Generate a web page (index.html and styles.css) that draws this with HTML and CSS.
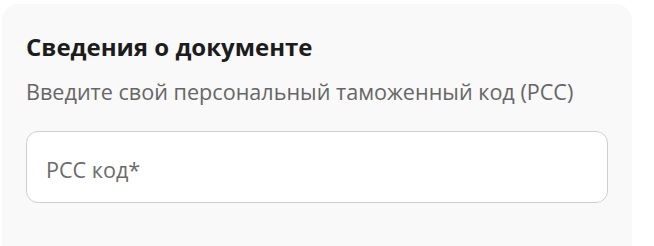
FILE: index.html
```html
<!DOCTYPE html>
<html lang="ru">
<head>
<meta charset="utf-8">
<title>Сведения о документе</title>
<link rel="stylesheet" href="styles.css">
</head>
<body>
<section class="card">
  <h2 class="title">Сведения о документе</h2>
  <p class="subtitle">Введите свой персональный таможенный код (РСС)</p>
  <label class="field">
    <span class="placeholder">РСС код*</span>
  </label>
</section>
</body>
</html>
```
FILE: styles.css
```css
html, body {
  margin: 0;
  padding: 0;
  background: #ffffff;
}

body {
  font-family: "Open Sans", "Noto Sans", sans-serif;
}

.card {
  margin: 4px 22px 0 2px;
  padding: 27px 24px 43px 24px;
  background: #f9f9f9;
  border-radius: 16px 16px 0 0;
}

.title {
  margin: 0;
  font-size: 24px;
  line-height: 32px;
  font-weight: 700;
  color: #1c1c1c;
}

.subtitle {
  margin: 14px 0 0 0;
  font-size: 21.6px;
  line-height: 29px;
  font-weight: 400;
  color: #666666;
}

.field {
  margin-top: 25px;
  height: 72px;
  box-sizing: border-box;
  border: 1px solid #cfcfcf;
  border-radius: 12px;
  background: #ffffff;
  padding: 0 19px;
  display: flex;
  align-items: center;
}

.placeholder {
  padding-top: 5px;
  font-size: 21.6px;
  line-height: 29px;
  color: #6b6b6b;
}
```
